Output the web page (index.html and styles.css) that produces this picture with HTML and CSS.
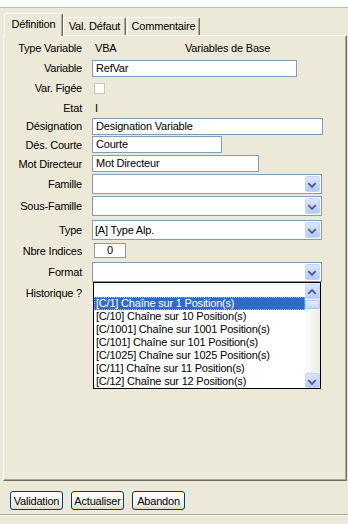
FILE: index.html
```html
<!DOCTYPE html>
<html lang="fr">
<head>
    <meta charset="UTF-8">
    <title>Définition Variable</title>
    <link rel="stylesheet" href="styles.css">
</head>
<body>
    <div class="topbar"></div>

    <!-- Onglets -->
    <div class="tabs">
        <div class="tab tab-def active">Définition</div>
        <div class="tab tab-val">Val. Défaut</div>
        <div class="tab tab-com">Commentaire</div>
    </div>

    <div class="panel">
        <div class="row h20">
            <span class="lbl">Type Variable</span>
            <span class="val vba">VBA</span>
            <span class="base">Variables de Base</span>
        </div>
        <div class="row h20">
            <span class="lbl">Variable</span>
            <div class="edit w-var">RefVar</div>
        </div>
        <div class="row h20">
            <span class="lbl">Var. Figée</span>
            <span class="check"></span>
        </div>
        <div class="row h19">
            <span class="lbl">Etat</span>
            <span class="val">I</span>
        </div>
        <div class="row h18">
            <span class="lbl">Désignation</span>
            <div class="edit w-des">Designation Variable</div>
        </div>
        <div class="row h19">
            <span class="lbl">Dés. Courte</span>
            <div class="edit w-court">Courte</div>
        </div>
        <div class="row h19">
            <span class="lbl">Mot Directeur</span>
            <div class="edit w-mot">Mot Directeur</div>
        </div>
        <div class="row h21">
            <span class="lbl">Famille</span>
            <div class="combo">
                <span class="combo-text"></span>
                <span class="drop"><svg width="15" height="16" viewBox="0 0 15 16"><polyline points="3.5,6 7.5,10 11.5,6" fill="none" stroke="#4d6185" stroke-width="2"/></svg></span>
            </div>
        </div>
        <div class="row h24">
            <span class="lbl">Sous-Famille</span>
            <div class="combo">
                <span class="combo-text"></span>
                <span class="drop"><svg width="15" height="16" viewBox="0 0 15 16"><polyline points="3.5,6 7.5,10 11.5,6" fill="none" stroke="#4d6185" stroke-width="2"/></svg></span>
            </div>
        </div>
        <div class="row h23">
            <span class="lbl">Type</span>
            <div class="combo">
                <span class="combo-text">[A] Type Alp.</span>
                <span class="drop"><svg width="15" height="16" viewBox="0 0 15 16"><polyline points="3.5,6 7.5,10 11.5,6" fill="none" stroke="#4d6185" stroke-width="2"/></svg></span>
            </div>
        </div>
        <div class="row h19">
            <span class="lbl">Nbre Indices</span>
            <div class="edit w-nbre">0</div>
        </div>
        <div class="row h24">
            <span class="lbl">Format</span>
            <div class="combo open">
                <span class="combo-text"></span>
                <span class="drop"><svg width="15" height="16" viewBox="0 0 15 16"><polyline points="3.5,6 7.5,10 11.5,6" fill="none" stroke="#4d6185" stroke-width="2"/></svg></span>

                <!-- liste déroulante ouverte -->
                <div class="list">
                    <div class="items">
                        <div class="item"></div>
                        <div class="item selected">[C/1] Chaîne sur 1 Position(s)</div>
                        <div class="item">[C/10] Chaîne sur 10 Position(s)</div>
                        <div class="item">[C/1001] Chaîne sur 1001 Position(s)</div>
                        <div class="item">[C/101] Chaîne sur 101 Position(s)</div>
                        <div class="item">[C/1025] Chaîne sur 1025 Position(s)</div>
                        <div class="item">[C/11] Chaîne sur 11 Position(s)</div>
                        <div class="item">[C/12] Chaîne sur 12 Position(s)</div>
                    </div>
                    <div class="scroll">
                        <span class="sbtn"><svg width="15" height="15" viewBox="0 0 15 15"><polyline points="3.5,9 7.5,5 11.5,9" fill="none" stroke="#4d6185" stroke-width="2"/></svg></span>
                        <span class="thumb"></span>
                        <span class="track"></span>
                        <span class="sbtn"><svg width="15" height="15" viewBox="0 0 15 15"><polyline points="3.5,6 7.5,10 11.5,6" fill="none" stroke="#4d6185" stroke-width="2"/></svg></span>
                    </div>
                </div>
            </div>
        </div>
        <div class="row h18">
            <span class="lbl">Historique ?</span>
        </div>
    </div>

    <div class="buttons">
        <button class="btn">Validation</button>
        <button class="btn">Actualiser</button>
        <button class="btn">Abandon</button>
    </div>
    <div class="sep"></div>
</body>
</html>
```

FILE: styles.css
```css
:root {
    --face: #ece9d8;
    --edge: #7f9db9;
    --shadow: #aca899;
    --dark: #716f64;
    --select: #316ac5;
}

* {
    margin: 0;
    padding: 0;
    box-sizing: border-box;
}

body {
    background: var(--face);
    font-family: "Liberation Sans", Arial, sans-serif;
    font-size: 11px;
    letter-spacing: -0.2px;
    color: #000;
    width: 348px;
    height: 524px;
    overflow: hidden;
}

.topbar {
    height: 8px;
    background: #fff;
    border-bottom: 1px solid #a9bde6;
}

/* Onglets */
.tabs {
    display: flex;
    align-items: flex-end;
    height: 27px;
    padding-left: 4px;
    position: relative;
    z-index: 1;
}

.tab {
    height: 18px;
    line-height: 16px;
    text-align: center;
    background: var(--face);
    border-top: 1px solid #fff;
    border-left: 1px solid #fff;
    border-right: 1px solid var(--dark);
    box-shadow: inset -1px 0 0 var(--shadow);
    border-radius: 2px 2px 0 0;
}

.tab.active {
    height: 23px;
    line-height: 20px;
    margin-bottom: -1px;
    padding-bottom: 2px;
}

.tab-def { width: 59px; }
.tab-val { width: 63px; }
.tab-com { width: 73px; margin-left: 1px; }

.panel {
    margin-left: 3px;
    width: 344px;
    height: 446px;
    border-top: 1px solid #fff;
    border-left: 1px solid #fff;
    border-right: 1px solid var(--dark);
    border-bottom: 1px solid var(--dark);
    box-shadow: inset -1px -1px 0 var(--shadow);
    padding-top: 2px;
}

/* Lignes du formulaire */
.row {
    display: flex;
    align-items: center;
}

.h18 { height: 18px; }
.h19 { height: 19px; }
.h20 { height: 20px; }
.h21 { height: 21px; }
.h23 { height: 23px; }
.h24 { height: 24px; }

.lbl {
    width: 78px;
    margin-right: 10px;
    text-align: right;
    white-space: nowrap;
}

.val {
    margin-left: 3px;
}

.val.vba {
    width: 90px;
}

.edit {
    height: 17px;
    line-height: 15px;
    border: 1px solid var(--edge);
    background: #fff;
    padding-left: 3px;
    white-space: nowrap;
    overflow: hidden;
}

.w-var { width: 205px; }
.w-des { width: 231px; }
.w-court { width: 130px; }
.w-mot { width: 167px; }

.w-nbre {
    width: 32px;
    height: 15px;
    line-height: 13px;
    margin-left: 2px;
    padding-left: 0;
    text-align: center;
}

.check {
    width: 11px;
    height: 11px;
    margin-left: 2px;
    border: 1px solid #cac8bb;
    background: #fbfbf8;
}

/* Combo */
.combo {
    position: relative;
    width: 230px;
    height: 20px;
    border: 1px solid var(--edge);
    background: #fff;
    display: flex;
    justify-content: space-between;
}

.combo-text {
    line-height: 18px;
    padding-left: 2px;
}

.drop,
.sbtn {
    display: flex;
    width: 15px;
    margin: 1px;
    background: linear-gradient(#dbe5fd, #b5c9f9);
    border: 1px solid #c6d5fb;
    border-radius: 2px;
}

.drop svg,
.sbtn svg {
    margin-left: -1px;
}

/* Liste ouverte */
.list {
    position: absolute;
    top: 19px;
    left: 0;
    width: 228px;
    height: 107px;
    border: 1px solid #000;
    background: #fff;
    display: flex;
    z-index: 2;
}

.items {
    flex: 1;
    padding-top: 1px;
}

.item {
    height: 13px;
    line-height: 12px;
    padding-left: 2px;
    white-space: nowrap;
    overflow: hidden;
}

.item.selected {
    background: var(--select);
    color: #fff;
    border: 1px dotted #f0a53c;
    line-height: 11px;
    padding-left: 1px;
}

.scroll {
    width: 15px;
    display: flex;
    flex-direction: column;
    background: linear-gradient(to right, #fbfbf8, #eeede5);
    padding-top: 1px;
}

.scroll .sbtn {
    height: 15px;
    width: 15px;
    margin: 0;
    flex: none;
}

.thumb {
    height: 9px;
    margin-top: 1px;
    background: linear-gradient(#e3ebfd, #c9d7fb);
    border: 1px solid #b3c6f3;
    border-radius: 2px;
}

.track {
    flex: 1;
}

/* Boutons */
.buttons {
    display: flex;
    gap: 8px;
    padding-left: 10px;
    margin-top: 10px;
}

.btn {
    width: 53px;
    height: 19px;
    font-family: inherit;
    font-size: 11px;
    letter-spacing: -0.2px;
    color: #000;
    border: 1px solid #003c74;
    border-radius: 3px;
    background: linear-gradient(#ffffff, #f1f0ea 70%, #dcd8cb);
}

.sep {
    margin-top: 4px;
    border-top: 1px solid var(--shadow);
    border-bottom: 1px solid #fff;
}
```
